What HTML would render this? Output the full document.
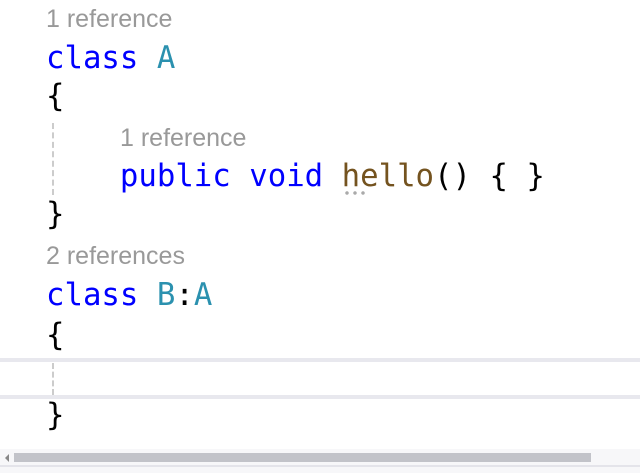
<!DOCTYPE html><html><head><style>
body{margin:0;width:640px;height:473px;background:#fff;position:relative;overflow:hidden;font-family:"DejaVu Sans Mono",monospace}
.l{position:absolute;left:46px;font-size:30.7px;line-height:38px;white-space:pre;color:#000}
.r{position:absolute;font-family:"Liberation Sans",sans-serif;font-size:25px;color:#999;line-height:28px}
.k{color:#0000ff}.t{color:#2b91af}.m{color:#74531f}
.g{position:absolute;left:52px;width:0;border-left:2px dashed #ccc}
</style></head><body>
<div style="position:absolute;left:0;top:358px;width:640px;height:4px;background:#e8e8ee"></div>
<div style="position:absolute;left:0;top:395px;width:640px;height:4px;background:#e8e8ee"></div>
<div class="r" style="left:46px;top:5px">1 reference</div>
<div class="l" style="top:40px"><span class="k">class</span> <span class="t">A</span></div>
<div class="l" style="top:78px">{</div>
<div class="g" style="top:123px;height:72px"></div>
<div class="r" style="left:120px;top:124px">1 reference</div>
<div class="l" style="top:158px">    <span class="k">public</span> <span class="k">void</span> <span class="m">hello</span>() { }</div>
<div style="position:absolute;left:343px;top:191px;width:24px;height:4px;background:radial-gradient(circle,#aaa 1.5px,transparent 2px) 0 0/8px 4px"></div>
<div class="l" style="top:196px">}</div>
<div class="r" style="left:46px;top:242px">2 references</div>
<div class="l" style="top:277px"><span class="k">class</span> <span class="t">B</span>:<span class="t">A</span></div>
<div class="l" style="top:317px">{</div>
<div class="g" style="top:363px;height:32px"></div>
<div class="l" style="top:397px">}</div>
<div style="position:absolute;left:0;top:449px;width:640px;height:24px;background:#f7f7f9"></div>
<div style="position:absolute;left:5px;top:454px;width:0;height:0;border-top:4px solid transparent;border-bottom:4px solid transparent;border-right:4px solid #888"></div>
<div style="position:absolute;left:14px;top:453px;width:577px;height:9px;background:#c2c3c9"></div>
<div style="position:absolute;left:0;top:465px;width:640px;height:2px;background:#e4e4ea"></div>
</body></html>
